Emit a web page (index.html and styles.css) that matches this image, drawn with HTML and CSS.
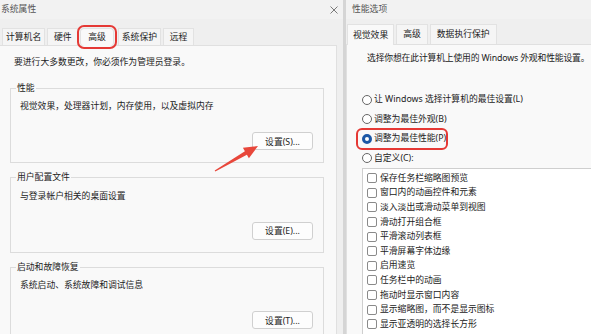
FILE: index.html
```html
<!DOCTYPE html>
<html lang="zh-CN">
<head>
    <meta charset="UTF-8">
    <title>系统属性</title>
    <link rel="stylesheet" href="styles.css">
</head>
<body>
    <div class="window window-left">
        <div class="titlebar">
            <span class="title">系统属性</span>
            <svg class="close" width="8" height="8" viewBox="0 0 8 8">
                <path d="M0.5 0.5 L7.5 7.5 M7.5 0.5 L0.5 7.5" stroke="#7a7a7a" stroke-width="1" fill="none"/>
            </svg>
        </div>
        <div class="tabs">
            <div class="tab">计算机名</div>
            <div class="tab">硬件</div>
            <div class="tab active marked">高级</div>
            <div class="tab">系统保护</div>
            <div class="tab">远程</div>
        </div>
        <div class="panel">
            <div class="note">要进行大多数更改，你必须作为管理员登录。</div>

            <fieldset class="group first">
                <legend>性能</legend>
                <div class="group-text">视觉效果，处理器计划，内存使用，以及虚拟内存</div>
                <div class="group-actions"><button>设置(S)...</button></div>
            </fieldset>

            <fieldset class="group">
                <legend>用户配置文件</legend>
                <div class="group-text">与登录帐户相关的桌面设置</div>
                <div class="group-actions"><button>设置(E)...</button></div>
            </fieldset>

            <fieldset class="group">
                <legend>启动和故障恢复</legend>
                <div class="group-text">系统启动、系统故障和调试信息</div>
                <div class="group-actions"><button>设置(T)...</button></div>
            </fieldset>
        </div>
    </div>

    <div class="window window-right">
        <div class="titlebar">
            <span class="title">性能选项</span>
        </div>
        <div class="tabs">
            <div class="tab active">视觉效果</div>
            <div class="tab">高级</div>
            <div class="tab">数据执行保护</div>
        </div>
        <div class="panel">
            <div class="note">选择你想在此计算机上使用的 Windows 外观和性能设置。</div>
            <div class="options">
                <div class="radio"><span class="dot"></span>让 Windows 选择计算机的最佳设置(L)</div>
                <div class="radio"><span class="dot"></span>调整为最佳外观(B)</div>
                <div class="radio checked marked"><span class="dot"></span>调整为最佳性能(P)</div>
                <div class="radio"><span class="dot"></span>自定义(C):</div>
            </div>
            <div class="list">
                <div class="item"><span class="box"></span>保存任务栏缩略图预览</div>
                <div class="item"><span class="box"></span>窗口内的动画控件和元素</div>
                <div class="item"><span class="box"></span>淡入淡出或滑动菜单到视图</div>
                <div class="item"><span class="box"></span>滑动打开组合框</div>
                <div class="item"><span class="box"></span>平滑滚动列表框</div>
                <div class="item"><span class="box"></span>平滑屏幕字体边缘</div>
                <div class="item"><span class="box"></span>启用速览</div>
                <div class="item"><span class="box"></span>任务栏中的动画</div>
                <div class="item"><span class="box"></span>拖动时显示窗口内容</div>
                <div class="item"><span class="box"></span>显示缩略图，而不是显示图标</div>
                <div class="item"><span class="box"></span>显示亚透明的选择长方形</div>
            </div>
        </div>
    </div>

    <!-- стрелка-указатель на кнопку -->
    <svg class="arrow" width="591" height="334" viewBox="0 0 591 334">
        <polygon points="258,146 248.9,158.2 246.9,154.7 215.3,171.4 214.7,170.6 244.9,151.3 242.9,147.8" fill="#e8473b"/>
    </svg>
</body>
</html>
```

FILE: styles.css
```css
body {
    margin: 0;
    width: 591px;
    height: 334px;
    overflow: hidden;
    position: relative;
    display: flex;
    align-items: flex-start;
    background-color: #efefef;
    font-family: "Noto Sans", "Noto Sans CJK SC", sans-serif;
    font-size: 8.8px;
    line-height: 11px;
    color: #222;
}

.window {
    display: flex;
    flex-direction: column;
    flex: none;
    height: 360px;
}

.window-left {
    width: 343px;
    border-right: 3px solid #d5d5d5;
}

.window-right {
    width: 270px; /* уходит за край кадра */
}

.titlebar {
    flex: none;
    height: 19px;
    display: flex;
    align-items: center;
    justify-content: space-between;
    color: #555;
    background-color: #f2f2f2;
}

.window-left .titlebar {
    padding: 0 5px 0 1px;
}

.window-right .titlebar {
    padding-left: 6px;
}

.tabs {
    flex: none;
    display: flex;
    align-items: flex-end;
}

.window-left .tabs {
    margin-top: 9px;
    height: 17px;
    padding-left: 2px;
}

.window-right .tabs {
    margin-top: 5px;
    height: 20px;
    padding-left: 1px;
}

.tab {
    box-sizing: border-box;
    height: 100%;
    min-width: 31px;
    padding: 0 3px;
    margin-right: 2px;
    display: flex;
    align-items: center;
    justify-content: center;
    background-color: #f5f5f5;
    border: 1px solid #e2e2e2;
    border-bottom: none;
    white-space: nowrap;
}

.tab.active {
    background-color: #f9f9f9;
    position: relative;
    z-index: 1;
    margin-bottom: -1px;
    height: calc(100% + 1px);
}

.window-left .tab.active {
    padding: 0 7px;
    margin: 0 4px -1px 0;
}

.window-right .tab {
    padding: 0 6px;
}

.window-right .tab.active {
    padding: 0 5px;
}

.tab.marked {
    outline: 2px solid #e53935;
    outline-offset: 1px;
    border-radius: 4px;
}

.panel {
    flex: 1;
    min-height: 0;
    background-color: #f9f9f9;
    border: 1px solid #e0e0e0;
}

.window-left .panel {
    margin: 0 6px 0 -1px;
    padding: 11px 12px 0 10px;
}

.window-right .panel {
    padding: 8px 0 0 15px;
}

.note {
    width: fit-content;
    white-space: nowrap;
}

.window-left .note {
    padding-left: 4px;
}

.window-right .note {
    padding-left: 5px;
    letter-spacing: -0.15px;
}

.group {
    border: 1px solid #dcdcdc;
    margin: 9px 0 0;
    padding: 0 10px 12px 5px;
    min-width: 0;
}

.group.first {
    margin-top: 14.5px;
}

.group legend {
    padding: 0 1px;
    line-height: 11px;
}

.group-text {
    padding: 7.5px 0 0 4px;
}

.group-actions {
    display: flex;
    justify-content: flex-end;
    margin-top: 20px;
}

button {
    width: 61px;
    height: 18px;
    padding: 0;
    border: 1px solid #d0d0d0;
    border-radius: 3px;
    background-color: #fdfdfd;
    font-family: inherit;
    font-size: 8.8px;
    color: #222;
}

.options {
    margin-top: 26px;
}

.radio {
    height: 19.5px;
    display: flex;
    align-items: center;
    width: fit-content;
    white-space: nowrap;
}

.dot {
    box-sizing: border-box;
    width: 10px;
    height: 10px;
    margin-right: 2px;
    border: 1px solid #666;
    border-radius: 50%;
    background-color: #fff;
}

.radio.checked .dot {
    border: 3px solid #1c58a6;
}

.radio.marked {
    margin-left: -5px;
    padding: 0 1px 0 5px;
    outline: 2px solid #e53935;
    outline-offset: -1px;
    border-radius: 5px;
}

.list {
    background-color: #fff;
    border: 1px solid #cfcfcf;
    padding-top: 2px;
    height: 200px;
}

.item {
    height: 14.6px;
    display: flex;
    align-items: center;
    padding-left: 4px;
    white-space: nowrap;
}

.box {
    box-sizing: border-box;
    width: 10px;
    height: 10px;
    margin-right: 3px;
    border: 1px solid #8a8a8a;
    border-radius: 2px;
    background-color: #fff;
}

.arrow {
    position: absolute;
    left: 0;
    top: 0;
    pointer-events: none;
}
```
